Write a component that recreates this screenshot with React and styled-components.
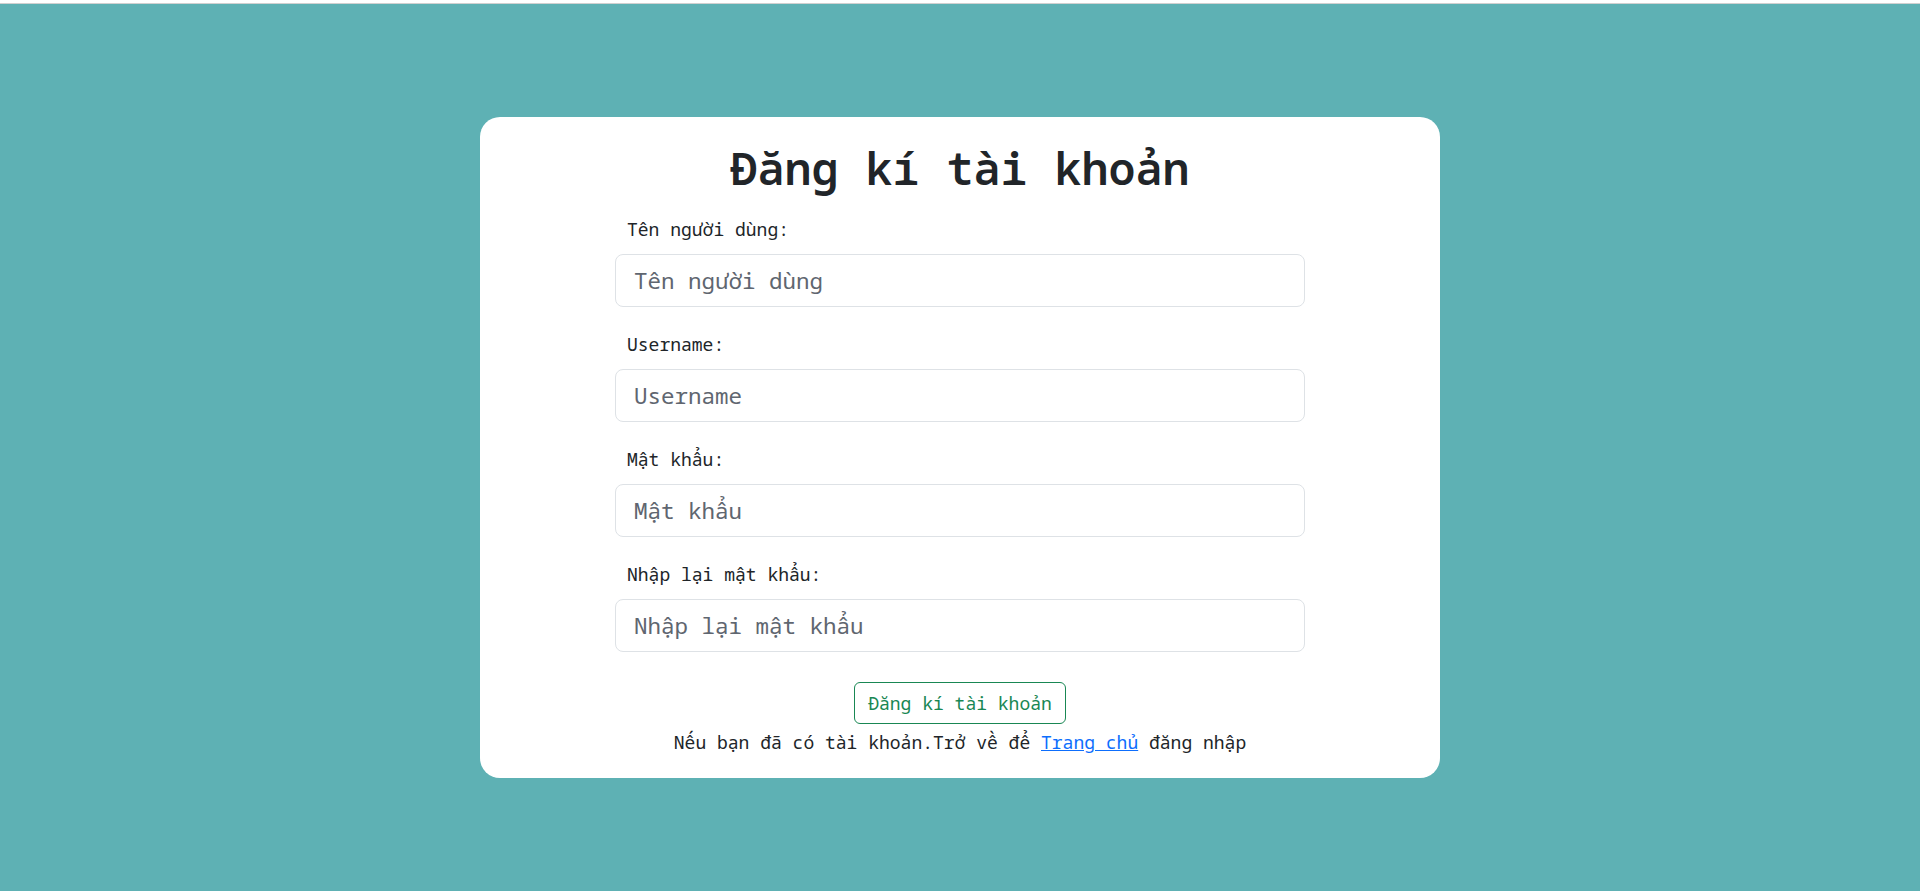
import React from "react"
import styled, { createGlobalStyle } from "styled-components"

const GlobalStyle = createGlobalStyle`
  html, body {
    margin: 0;
    padding: 0;
  }
  body {
    font-family: "Noto Sans Mono", "Liberation Mono", monospace;
    color: #212529;
    background: #ffffff;
  }
  * {
    box-sizing: border-box;
  }
`

const Page = styled.div`
  min-height: 891px;
  margin-top: 3px;
  border-top: 1px solid #d0d0d0;
  background-color: #5eb1b4;
  padding-top: 113px;
`

const Card = styled.div`
  width: 960px;
  margin: 0 auto;
  background: #ffffff;
  border-radius: 20px;
  padding: 24px 0 22px;
  display: flex;
  flex-direction: column;
  align-items: center;
`

const Title = styled.h1`
  margin: 0 0 21px;
  font-size: 45px;
  line-height: 54px;
  font-weight: 600;
  color: #212529;
`

const Form = styled.form`
  width: 690px;
  display: flex;
  flex-direction: column;
`

const Field = styled.div`
  display: flex;
  flex-direction: column;
  margin-bottom: 24px;
`

const Label = styled.label`
  font-size: 18px;
  line-height: 27px;
  padding-left: 12px;
  margin-bottom: 11px;
`

const Input = styled.input`
  height: 53px;
  padding: 0 18px;
  font-family: inherit;
  font-size: 22.5px;
  color: #212529;
  border: 1px solid #dee2e6;
  border-radius: 8px;
  outline: none;
  &::placeholder {
    color: #5f6670;
  }
`

const Actions = styled.div`
  display: flex;
  flex-direction: column;
  align-items: center;
  margin-top: 6px;
`

const SubmitButton = styled.button`
  height: 42px;
  padding: 0 13px;
  font-family: inherit;
  font-size: 18px;
  color: #198754;
  background: transparent;
  border: 1px solid #198754;
  border-radius: 6px;
  cursor: pointer;
  margin-bottom: 5px;
`

const Note = styled.p`
  margin: 0;
  font-size: 18px;
  line-height: 27px;
  a {
    color: #0d6efd;
    text-decoration: underline;
  }
`

const fields = [
  { id: "fullname", label: "Tên người dùng:", placeholder: "Tên người dùng", type: "text" },
  { id: "username", label: "Username:", placeholder: "Username", type: "text" },
  { id: "password", label: "Mật khẩu:", placeholder: "Mật khẩu", type: "password" },
  { id: "repassword", label: "Nhập lại mật khẩu:", placeholder: "Nhập lại mật khẩu", type: "password" },
]

export default function App() {
  return (
    <>
      <GlobalStyle />
      <Page>
        <Card>
          <Title>Đăng kí tài khoản</Title>
          <Form onSubmit={e => e.preventDefault()}>
            {fields.map(f => (
              <Field key={f.id}>
                <Label htmlFor={f.id}>{f.label}</Label>
                <Input id={f.id} type={f.type} placeholder={f.placeholder} />
              </Field>
            ))}
          </Form>
          <Actions>
            <SubmitButton type="submit">Đăng kí tài khoản</SubmitButton>
            <Note>
              Nếu bạn đã có tài khoản.Trở về để <a href="#">Trang chủ</a> đăng nhập
            </Note>
          </Actions>
        </Card>
      </Page>
    </>
  )
}
